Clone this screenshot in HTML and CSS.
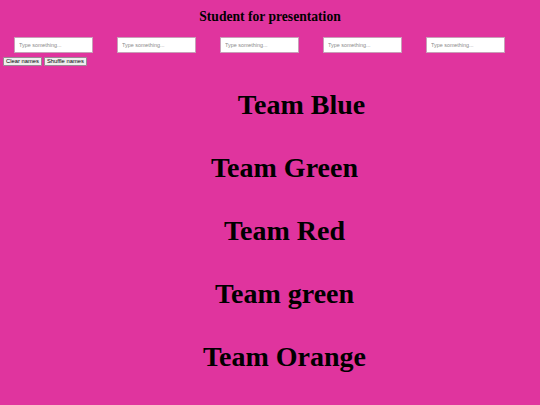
FILE: index.html
```html
<!DOCTYPE html>
<html lang="en">
  <head>
    <meta charset="UTF-8" />
    <meta name="viewport" content="width=device-width, initial-scale=1.0" />
    <title>Student for presentation</title>
    <link rel="stylesheet" href="styles.css">
  </head>
  <body>
    <h3 class="title">Student for presentation</h3>

    <div class="names">
      <input placeholder="Type something..." />
      <input placeholder="Type something..." />
      <input placeholder="Type something..." />
      <input placeholder="Type something..." />
      <input placeholder="Type something..." />
    </div>

    <div class="actions">
      <button>Clear names</button>
      <button>Shuffle names</button>
    </div>

    <ul class="teams">
      <li class="team team-first">Team Blue</li>
      <li class="team">Team Green</li>
      <li class="team">Team Red</li>
      <li class="team">Team green</li>
      <li class="team">Team Orange</li>
    </ul>
  </body>
</html>
```

FILE: styles.css
```css
body {
  margin: 0;
  background: rgb(224, 52, 158);
  font-family: "Liberation Serif", "Times New Roman", serif;
  color: #000;
}

.title {
  margin: 0;
  padding-top: 7px;
  height: 31px;
  box-sizing: border-box;
  font-size: 13.6px;
  line-height: 20px;
  text-align: center;
}

.names {
  display: flex;
  gap: 24px;
  padding-left: 14px;
  margin-top: 6px;

  input {
    width: 79px;
    height: 16px;
    box-sizing: border-box;
    padding: 0 4px;
    border: 1px solid #c8a0b8;
    background: #fff;
    font-family: "Liberation Sans", Arial, sans-serif;
    font-size: 5.4px;

    &::placeholder {
      color: #8a8a8a;
    }
  }
}

.actions {
  display: flex;
  gap: 2px;
  padding-left: 3px;
  margin-top: 4px;

  button {
    height: 9px;
    padding: 0 2px;
    box-sizing: border-box;
    border: 1px solid #9a8a94;
    border-radius: 1px;
    background: #efefef;
    font-family: "Liberation Sans", Arial, sans-serif;
    font-size: 5.8px;
    line-height: 7px;
    color: #000;
  }
}

.teams {
  list-style: none;
  margin: 7px 0 0;
  padding: 0 0 0 29px;
}

.team {
  font-size: 28px;
  font-weight: 700;
  line-height: 63px;
  text-align: center;

  &.team-first {
    padding-left: 34px;
  }
}
```
